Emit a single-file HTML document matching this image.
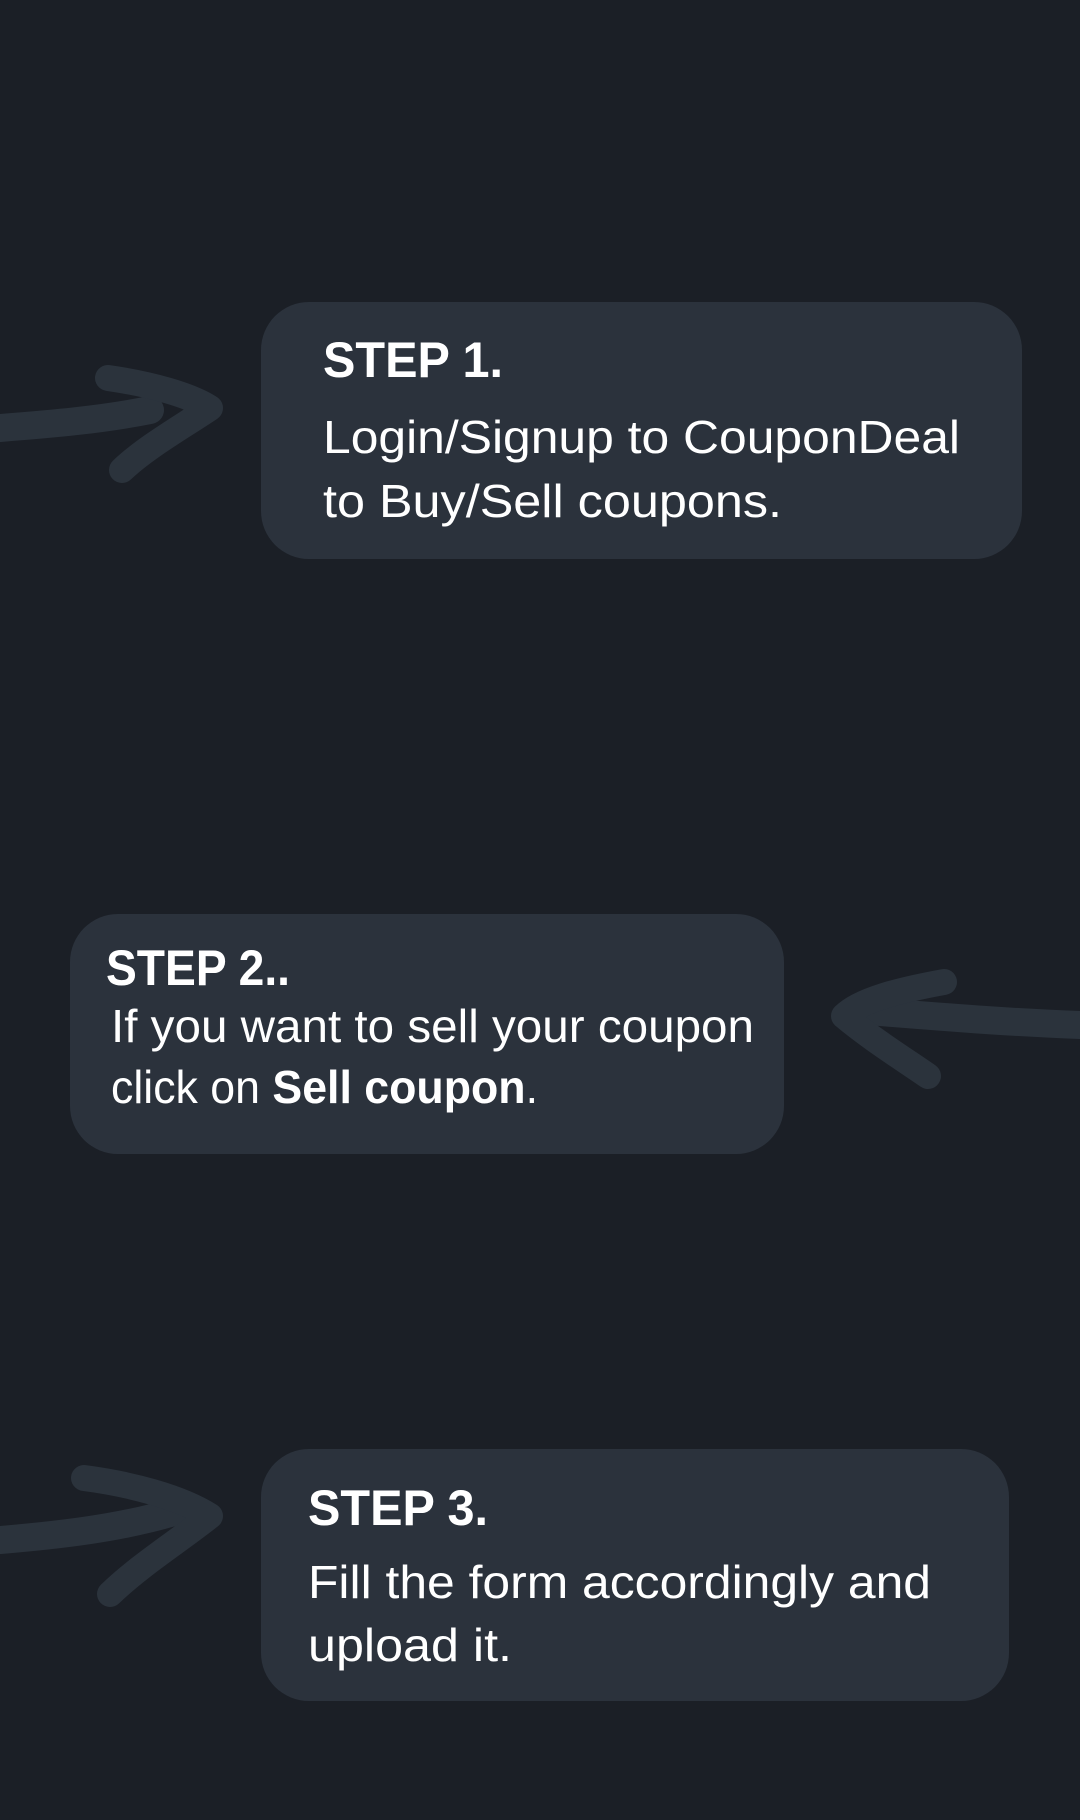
<!DOCTYPE html>
<html><head><meta charset="utf-8"><style>
html,body{margin:0;padding:0;background:#1b1f26;}
svg{display:block}
</style></head><body>
<svg width="1080" height="1820" viewBox="0 0 1080 1820" xmlns="http://www.w3.org/2000/svg">
<rect width="1080" height="1820" fill="#1b1f26"/>
<rect x="261" y="302" width="761" height="257" rx="48" fill="#2b323c"/>
<rect x="70" y="914" width="714" height="240" rx="48" fill="#2b323c"/>
<rect x="261" y="1449" width="748" height="252" rx="48" fill="#2b323c"/>
<g fill="none" stroke="#2b333c" stroke-linecap="round" stroke-linejoin="round">
<path d="M0 428 C50 424 100 420 150 410" stroke-width="28"/>
<path d="M108 378 C150 384 190 395 210 408 C180 428 145 448 122 470" stroke-width="26"/>
<path d="M1080 1025 C1000 1022 930 1016 855 1010" stroke-width="28"/>
<path d="M944 982 C900 990 860 1000 844 1016 C870 1038 905 1060 928 1076" stroke-width="26"/>
<path d="M0 1540 C60 1535 120 1528 174 1512" stroke-width="28"/>
<path d="M84 1478 C130 1484 180 1497 210 1516 C180 1540 140 1565 110 1594" stroke-width="26"/>
</g>
<g font-family="Liberation Sans, sans-serif" fill="#ffffff">
<text x="323" y="377" font-size="50" font-weight="bold" textLength="180" lengthAdjust="spacingAndGlyphs">STEP 1.</text>
<text x="323" y="453" font-size="46" textLength="637" lengthAdjust="spacingAndGlyphs">Login/Signup to CouponDeal</text>
<text x="323" y="517" font-size="46" textLength="459" lengthAdjust="spacingAndGlyphs">to Buy/Sell coupons.</text>
<text x="106" y="985" font-size="50" font-weight="bold" textLength="184" lengthAdjust="spacingAndGlyphs">STEP 2..</text>
<text x="111" y="1042" font-size="46" textLength="643" lengthAdjust="spacingAndGlyphs">If you want to sell your coupon</text>
<text x="111" y="1103" font-size="46" textLength="427" lengthAdjust="spacingAndGlyphs">click on <tspan font-weight="bold">Sell coupon</tspan>.</text>
<text x="308" y="1525" font-size="50" font-weight="bold" textLength="180" lengthAdjust="spacingAndGlyphs">STEP 3.</text>
<text x="308" y="1598" font-size="46" textLength="623" lengthAdjust="spacingAndGlyphs">Fill the form accordingly and</text>
<text x="308" y="1661" font-size="46" textLength="204" lengthAdjust="spacingAndGlyphs">upload it.</text>
</g>
</svg>
</body></html>
